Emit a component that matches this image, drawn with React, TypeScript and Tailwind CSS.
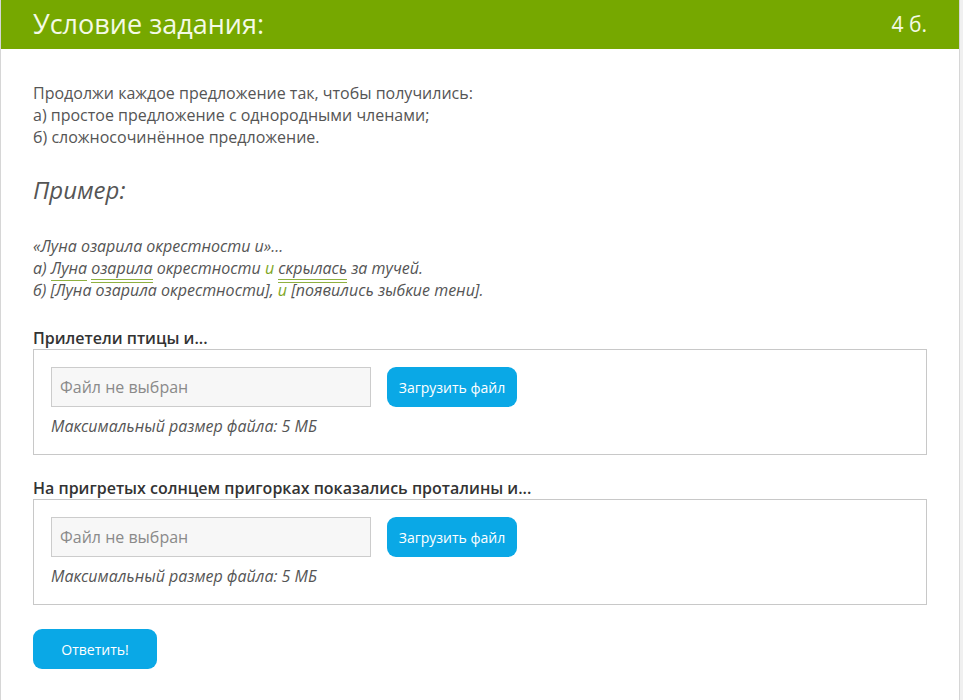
import React from "react";

const font = { fontFamily: '"Open Sans", "Noto Sans", sans-serif' };

function Upload({ label }: { label: string }) {
  return (
    <div>
      <div className="text-[16px] leading-[22px] font-semibold text-[#333]">{label}</div>
      <div className="border border-[#c8c8c8] px-[17px] pt-[17px] pb-[17px]">
        <div className="flex items-center gap-4">
          <div className="w-[320px] h-[40px] bg-[#f7f7f7] border border-[#cccccc] flex items-center px-[8px] text-[16px] text-[#8a8a8a]">
            Файл не выбран
          </div>
          <button className="h-[40px] w-[130px] rounded-[9px] bg-[#0aa8e6] text-white text-[14px]">Загрузить файл</button>
        </div>
        <div className="mt-[8px] text-[16px] leading-[22px] italic text-[#555]">Максимальный размер файла: 5 МБ</div>
      </div>
    </div>
  );
}

export default function App() {
  return (
    <div className="min-h-[700px] bg-[#f0f0f0]" style={font}>
      <div className="w-[960px] min-h-[700px] bg-white border-l border-r border-[#d6d6d6]">
        <div className="h-[49px] bg-[#76a800] flex items-center justify-between pl-[32px] pr-[32px]">
          <span className="text-[27px] text-[#f4fae6]">Условие задания:</span>
          <span className="text-[21px] text-[#f4fae6]">4 б.</span>
        </div>
        <div className="px-[32px]">
          <div className="mt-[33px] text-[16px] leading-[22px] text-[#555]">
            <div>Продолжи каждое предложение так, чтобы получились:</div>
            <div>а) простое предложение с однородными членами;</div>
            <div>б) сложносочинённое предложение.</div>
          </div>
          <div className="mt-[25px] text-[24px] leading-[33px] italic text-[#555]">Пример:</div>
          <div className="mt-[29px] text-[16px] leading-[22px] italic text-[#555]">
            <div>«Луна озарила окрестности и»...</div>
            <div>
              а) <span className="border-b border-[#8fb040] pb-[1px]">Луна</span>{" "}
              <span className="border-b-[4px] border-double border-[#8fb040]">озарила</span> окрестности{" "}
              <span className="text-[#7ea61e]">и</span>{" "}
              <span className="border-b-[4px] border-double border-[#8fb040]">скрылась</span> за тучей.
            </div>
            <div>
              б) [Луна озарила окрестности], <span className="text-[#7ea61e]">и</span> [появились зыбкие тени].
            </div>
          </div>
          <div className="mt-[26px]">
            <Upload label="Прилетели птицы и..." />
          </div>
          <div className="mt-[22px]">
            <Upload label="На пригретых солнцем пригорках показались проталины и..." />
          </div>
          <button className="mt-[24px] h-[40px] w-[124px] rounded-[9px] bg-[#0aa8e6] text-white text-[14px]">Ответить!</button>
        </div>
      </div>
    </div>
  );
}
